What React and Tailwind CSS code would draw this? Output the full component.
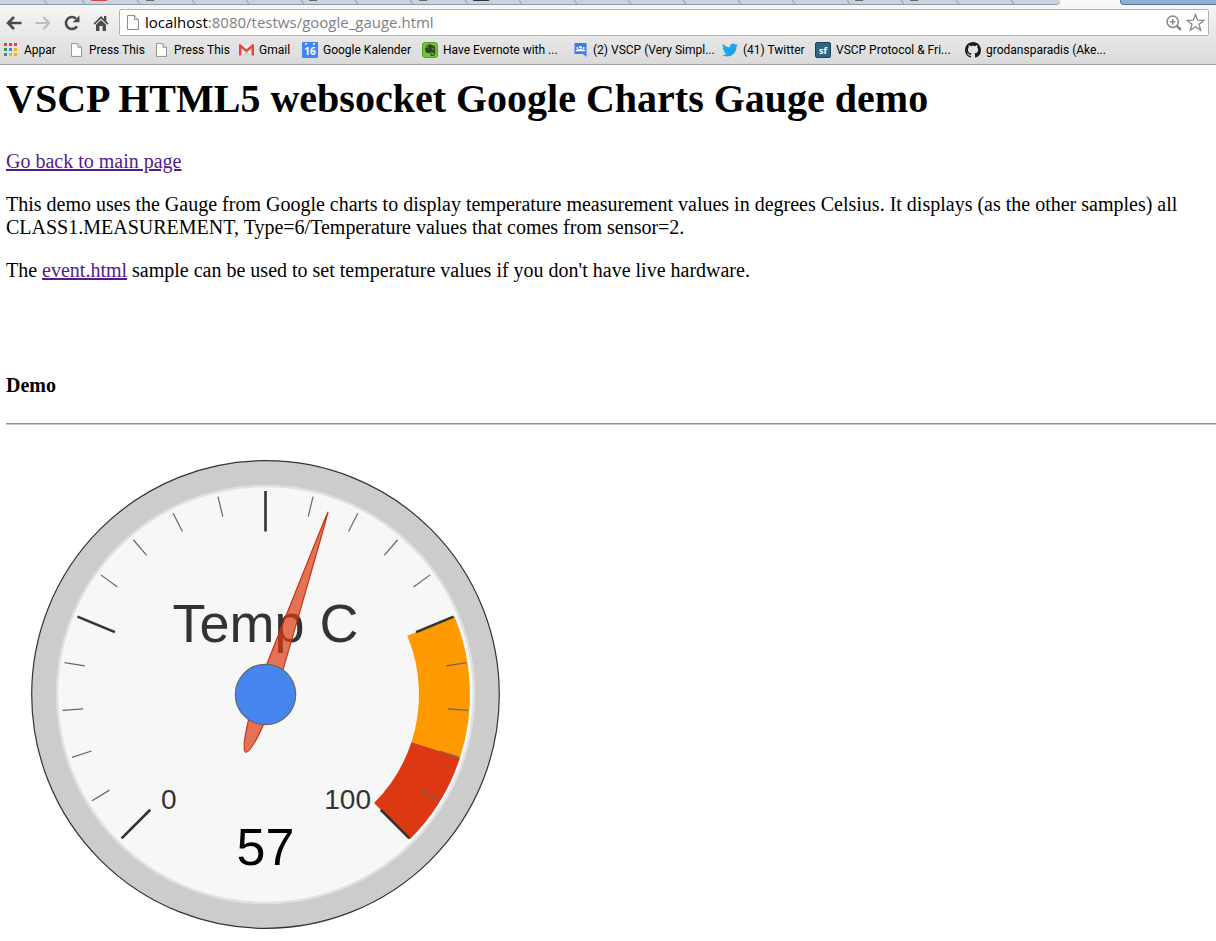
import React from "react";

const CX = 234.5;
const CY = 234.5;

function polar(value, radius) {
  const a = ((-135 + value * 2.7) * Math.PI) / 180;
  return [CX + radius * Math.sin(a), CY - radius * Math.cos(a)];
}

function band(from, to, inner, outer) {
  const [x1, y1] = polar(from, outer);
  const [x2, y2] = polar(to, outer);
  const [x3, y3] = polar(to, inner);
  const [x4, y4] = polar(from, inner);
  return `M${x1} ${y1}A${outer} ${outer} 0 0 1 ${x2} ${y2}L${x3} ${y3}A${inner} ${inner} 0 0 0 ${x4} ${y4}Z`;
}

function Gauge({ label, value }) {
  const ticks = Array.from({ length: 21 }, (_, i) => i);
  return (
    <svg width="469" height="469" viewBox="0 0 469 469" role="img" aria-label={`${label} ${value}`} className="block font-['Liberation_Sans',Arial,sans-serif]">
      <circle cx={CX} cy={CY} r="233.8" fill="#cccccc" stroke="#333333" strokeWidth="1.2" />
      <circle cx={CX} cy={CY} r="208.5" fill="#f7f7f7" stroke="#e0e0e0" strokeWidth="2.4" />
      <path d={band(75, 90, 153.5, 204.5)} fill="#ff9900" />
      <path d={band(90, 100, 153.5, 204.5)} fill="#dc3912" />
      <text x={CX} y="182" textAnchor="middle" fontSize="54" fill="#333333">{label}</text>
      {ticks.map((i) => {
        const major = i % 5 === 0;
        const [x1, y1] = polar(i * 5, 203.5);
        const [x2, y2] = polar(i * 5, major ? 163 : 183);
        return <line key={i} x1={x1} y1={y1} x2={x2} y2={y2} stroke={major ? "#333333" : "#666666"} strokeWidth={major ? 2.6 : 1.2} />;
      })}
      <text x="130" y="349" fontSize="28" fill="#333333">0</text>
      <text x="340" y="349" textAnchor="end" fontSize="28" fill="#333333">100</text>
      <text x={CX} y="405" textAnchor="middle" fontSize="52" fill="#000000">{value}</text>
      <g transform={`translate(${CX} ${CY}) rotate(${-135 + value * 2.7})`}>
        <path d="M0 -193C1 -185 9.5 -18 9.5 0C9.5 22 5.5 61 0 61C-5.5 61 -9.5 22 -9.5 0C-9.5 -18 -1 -185 0 -193Z" fill="#dc3912" fillOpacity="0.7" stroke="#c63310" strokeWidth="1.2" />
      </g>
      <circle cx={CX} cy={CY} r="30.2" fill="#4684ee" stroke="#666666" strokeWidth="1.2" />
    </svg>
  );
}

function PageIcon({ className }) {
  return (
    <svg viewBox="0 0 12 15" className={className} fill="#fdfdfd" stroke="#8c8c8c" strokeWidth="1">
      <path d="M.5 .5H7.5L11.5 4.5V14.5H.5Z" />
      <path d="M7.5 .5V4.5H11.5" fill="#e6e6e6" />
    </svg>
  );
}

const appColors = ["#ea4335", "#ea4335", "#ea4335", "#2f9e58", "#3b82f0", "#f5b400", "#2f9e58", "#f5b400", "#f5b400"];

function AppsIcon() {
  return (
    <svg viewBox="0 0 14 14" className="size-[14px]" shapeRendering="crispEdges">
      {appColors.map((c, i) => (
        <rect key={i} x={(i % 3) * 5} y={Math.floor(i / 3) * 5} width="3" height="3" fill={c} />
      ))}
    </svg>
  );
}

function GmailIcon() {
  return (
    <svg viewBox="0 0 15 12" className="h-3 w-[15px]">
      <path d="M1 1H14V11.5H1Z" fill="#eeeeee" />
      <path d="M3 11.5L7.5 6.5L12 11.5Z" fill="#d2d2d2" />
      <path d="M0 1.2Q0 0 1.3 0L7.5 5.2L13.7 0Q15 0 15 1.2V11.5H12.5V4.2L7.5 8.4L2.5 4.2V11.5H0Z" fill="#dd4b3e" />
    </svg>
  );
}

function CalendarIcon() {
  return (
    <svg viewBox="0 0 16 16" className="size-4">
      <rect width="16" height="16" rx="1" fill="#4285f4" />
      <circle cx="4" cy="2" r="1" fill="#fff" />
      <circle cx="12" cy="2" r="1" fill="#fff" />
      <text x="8" y="13" textAnchor="middle" fontSize="10" fontWeight="700" fill="#fff" className="font-['Open_Sans',sans-serif]">16</text>
    </svg>
  );
}

function EvernoteIcon() {
  return (
    <svg viewBox="0 0 16 16" className="size-4">
      <rect x=".5" y=".5" width="15" height="15" rx="2.5" fill="#6cc72f" stroke="#55a423" />
      <path d="M6 2.5H9.3Q10 2.5 10.3 3.3L12 3.8Q13 4 13.1 5.2Q13.5 9 12.8 12.2Q12.4 14 10.8 14H9.5Q8.3 14 8.3 12.6Q8.3 11.2 9.7 11.2H10.2V12.2H9.7V13H10.8Q11.5 13 11.5 12V10.8Q10 10.9 9 10.2Q8.4 11.3 7 11.2Q4 11 3.5 9.2Q3 7.5 3 5.8H5.3Q6 5.8 6 5Z" fill="#38432f" />
      <path d="M5.4 2.7V5.2H3.1Z" fill="#38432f" />
      <circle cx="11" cy="7" r=".7" fill="#8fd75d" />
    </svg>
  );
}

function GroupsIcon() {
  return (
    <svg viewBox="0 0 13 14" className="h-[14px] w-[13px]">
      <path d="M.5 0H12.5V14L9 11H.5Z" fill="#3b7ded" />
      <circle cx="3.3" cy="5" r="1" fill="#fff" />
      <circle cx="6.5" cy="4.2" r="1.3" fill="#fff" />
      <circle cx="9.7" cy="5" r="1" fill="#fff" />
      <path d="M1.5 8.2Q1.8 6.3 4 6.6Q6.5 5 9 6.6Q11.2 6.3 11.5 8.2Z" fill="#fff" />
    </svg>
  );
}

function TwitterIcon() {
  return (
    <svg viewBox="0 0 24 24" className="size-4" fill="#19a5ea">
      <path d="M23.95 4.57a10 10 0 0 1-2.82.77 4.96 4.96 0 0 0 2.16-2.72c-.95.55-2 .95-3.13 1.18a4.92 4.92 0 0 0-8.38 4.48C7.69 8.1 4.07 6.13 1.64 3.16a4.8 4.8 0 0 0-.67 2.48c0 1.71.87 3.21 2.19 4.1a4.9 4.9 0 0 1-2.23-.62v.06a4.92 4.92 0 0 0 3.95 4.83 5 5 0 0 1-2.21.08 4.94 4.94 0 0 0 4.6 3.42A9.87 9.87 0 0 1 0 19.54a13.99 13.99 0 0 0 7.55 2.21c9.05 0 14-7.5 14-13.98 0-.21 0-.42-.02-.63a9.94 9.94 0 0 0 2.42-2.57z" />
    </svg>
  );
}

function SourceForgeIcon() {
  return (
    <svg viewBox="0 0 16 16" className="size-4">
      <rect x=".5" y=".5" width="15" height="15" rx="1.5" fill="#2f6684" stroke="#1d4358" />
      <text x="8" y="11.5" textAnchor="middle" fontSize="9" fontWeight="700" fill="#fff" className="font-['Open_Sans',sans-serif]">sf</text>
    </svg>
  );
}

function GitHubIcon() {
  return (
    <svg viewBox="0 0 16 16" className="size-4" fill="#1b1b1b">
      <path d="M8 0C3.58 0 0 3.58 0 8c0 3.54 2.29 6.53 5.47 7.59.4.07.55-.17.55-.38 0-.19-.01-.82-.01-1.49-2.01.37-2.53-.49-2.69-.94-.09-.23-.48-.94-.82-1.13-.28-.15-.68-.52-.01-.53.63-.01 1.08.58 1.23.82.72 1.21 1.87.87 2.33.66.07-.52.28-.87.51-1.07-1.78-.2-3.64-.89-3.64-3.95 0-.87.31-1.59.82-2.15-.08-.2-.36-1.02.08-2.12 0 0 .67-.21 2.2.82.64-.18 1.32-.27 2-.27s1.36.09 2 .27c1.53-1.04 2.2-.82 2.2-.82.44 1.1.16 1.92.08 2.12.51.56.82 1.27.82 2.15 0 3.07-1.87 3.75-3.65 3.95.29.25.54.73.54 1.48 0 1.07-.01 1.93-.01 2.2 0 .21.15.46.55.38A8.01 8.01 0 0 0 16 8c0-4.42-3.58-8-8-8z" />
    </svg>
  );
}

const bookmarks = [
  { label: "Appar", icon: <AppsIcon />, width: "w-[65px]" },
  { label: "Press This", icon: <PageIcon className="h-[14px] w-[11px]" />, width: "w-[85px]" },
  { label: "Press This", icon: <PageIcon className="h-[14px] w-[11px]" />, width: "w-[85px]" },
  { label: "Gmail", icon: <GmailIcon />, width: "w-[64px]" },
  { label: "Google Kalender", icon: <CalendarIcon />, width: "w-[120px]" },
  { label: "Have Evernote with ...", icon: <EvernoteIcon />, width: "w-[150px]" },
  { label: "(2) VSCP (Very Simpl...", icon: <GroupsIcon />, width: "w-[150px]" },
  { label: "(41) Twitter", icon: <TwitterIcon />, width: "w-[93px]" },
  { label: "VSCP Protocol & Fri...", icon: <SourceForgeIcon />, width: "w-[150px]" },
  { label: "grodansparadis (Ake...", icon: <GitHubIcon />, width: "w-[150px]" },
];

function TabStrip() {
  const tabs = Array.from({ length: 17 }, (_, i) => i);
  return (
    <div className="flex h-[5px] overflow-hidden bg-[#f7f7f7]">
      <div className="flex w-[1060px] shrink-0 overflow-hidden rounded-br border-b border-[#8f9bab] bg-[#c6d3e1]">
        <div className="w-[46px] skew-x-[30deg] border-r border-[#8f9bab]" />
        <div className="w-[38px] skew-x-[30deg] border-r border-[#8f9bab]" />
        {tabs.map((i) => (
          <div key={i} className="flex flex-1 skew-x-[30deg] border-r border-[#8f9bab] pl-2">
            {i === 0 && <span className="h-px w-4 bg-[#e0404c]" />}
            {(i === 1 || i === 4 || i === 6 || i === 14 || i === 15) && <span className="h-px w-2 bg-[#65686c]" />}
            {i === 7 && <span className="h-px w-4 bg-[#2c3440]" />}
          </div>
        ))}
        <div className="w-[48px]" />
      </div>
      <div className="w-[60px] shrink-0" />
      <div className="flex-1 rounded-bl border-b border-l border-[#5c7391] bg-[#8fb0d6]" />
    </div>
  );
}

function BrowserChrome() {
  return (
    <header className="border-b border-[#a3a3a3] bg-linear-to-b from-[#f8f8f8] to-[#dadada] font-['Open_Sans','Noto_Sans',sans-serif] text-black">
      <TabStrip />
      <div className="flex items-center pt-1 pr-[7px] pl-[6px]">
        <button type="button" aria-label="Back" className="mr-[13px]">
          <svg viewBox="0 0 16 14" className="h-[14px] w-4" fill="none" stroke="#4a4a4a" strokeWidth="2.6">
            <path d="M8 1L2 7L8 13M2 7H15.5" />
          </svg>
        </button>
        <button type="button" aria-label="Forward" className="mr-[13px]">
          <svg viewBox="0 0 16 14" className="h-[14px] w-4" fill="none" stroke="#bdbdbd" strokeWidth="2.2">
            <path d="M8.5 1L14 7L8.5 13M14 7H.5" />
          </svg>
        </button>
        <button type="button" aria-label="Reload" className="mr-[13px]">
          <svg viewBox="0 0 16 16" className="size-4">
            <path d="M13 11.2A6 6 0 1 1 12 3.6" fill="none" stroke="#4a4a4a" strokeWidth="2.6" />
            <path d="M15.5 .5V7.3H8.7Z" fill="#4a4a4a" />
          </svg>
        </button>
        <button type="button" aria-label="Home" className="mr-[10px]">
          <svg viewBox="0 0 16 16" className="size-4" fill="#4a4a4a">
            <path d="M8 1L.5 8.6L1.6 9.7L8 3.4L14.4 9.7L15.5 8.6L13.3 6.3V1H11V4Z" />
            <path d="M3 9.8L8 5L13 9.8V16H9.6V11H6.4V16H3Z" />
          </svg>
        </button>
        <form className="flex h-[27px] flex-1 items-center rounded-xs border border-[#b3b3b3] bg-white pr-[3px] pl-[7px]" onSubmit={(e) => e.preventDefault()}>
          <PageIcon className="mr-[6px] h-[15px] w-3" />
          <div className="relative h-full flex-1">
            <input type="text" aria-label="Address" defaultValue="localhost:8080/testws/google_gauge.html" className="size-full text-[15px] text-transparent caret-black outline-none" />
            <span aria-hidden="true" className="pointer-events-none absolute inset-0 flex items-center text-[15px] text-[#808080]">
              <span className="text-black">localhost</span>:8080/testws/google_gauge.html
            </span>
          </div>
          <button type="button" aria-label="Zoom" className="mr-1">
            <svg viewBox="0 0 16 16" className="size-4" fill="none" stroke="#858585">
              <circle cx="6.7" cy="6.7" r="5.7" strokeWidth="1.5" />
              <path d="M6.7 4V9.4M4 6.7H9.4" strokeWidth="1.4" />
              <path d="M10.8 10.8L14.8 14.8" strokeWidth="2.6" />
            </svg>
          </button>
          <button type="button" aria-label="Bookmark this page">
            <svg viewBox="0 0 20 20" className="size-[19px]" fill="#fff" stroke="#858585" strokeWidth="1.3">
              <path d="M10 1.5L12.3 7.5L18.8 7.8L13.7 11.8L15.5 18.2L10 14.5L4.5 18.2L6.3 11.8L1.2 7.8L7.7 7.5Z" />
            </svg>
          </button>
        </form>
      </div>
      <nav aria-label="Bookmarks" className="flex h-7 items-center overflow-hidden pl-[3px] font-[Roboto,'Open_Sans',sans-serif] text-[12px]">
        {bookmarks.map((b, i) => (
          <a key={i} href="#" className={`flex shrink-0 items-center gap-[5px] whitespace-nowrap ${b.width}`}>
            <span className="flex w-4 shrink-0 justify-center">{b.icon}</span>
            {b.label}
          </a>
        ))}
      </nav>
    </header>
  );
}

export default function App() {
  return (
    <div className="min-h-screen bg-white">
      <BrowserChrome />
      <main className="overflow-hidden pb-3 pl-[6px] font-['Liberation_Serif','Times_New_Roman',serif] text-[20px] leading-[23px] text-black">
        <h1 className="mt-[11px] text-[40px] leading-[46px] font-bold">VSCP HTML5 websocket Google Charts Gauge demo</h1>
        <p className="mt-7">
          <a href="#" className="text-[#551a8b] underline">Go back to main page</a>
        </p>
        <p className="mt-5">
          This demo uses the Gauge from Google charts to display temperature measurement values in degrees Celsius. It displays (as the other samples) all CLASS1.MEASUREMENT, Type=6/Temperature values that comes from sensor=2.
        </p>
        <p className="mt-5">
          The <a href="#" className="text-[#551a8b] underline">event.html</a> sample can be used to set temperature values if you don't have live hardware.
        </p>
        <h4 className="mt-[92px] font-bold">Demo</h4>
        <hr className="mt-[26px] h-[2px] border-t border-b border-t-[#8f8f8f] border-b-[#c8c8c8]" />
        <div className="mt-[35px] pl-[25px]">
          <Gauge label="Temp C" value={57} />
        </div>
      </main>
    </div>
  );
}
